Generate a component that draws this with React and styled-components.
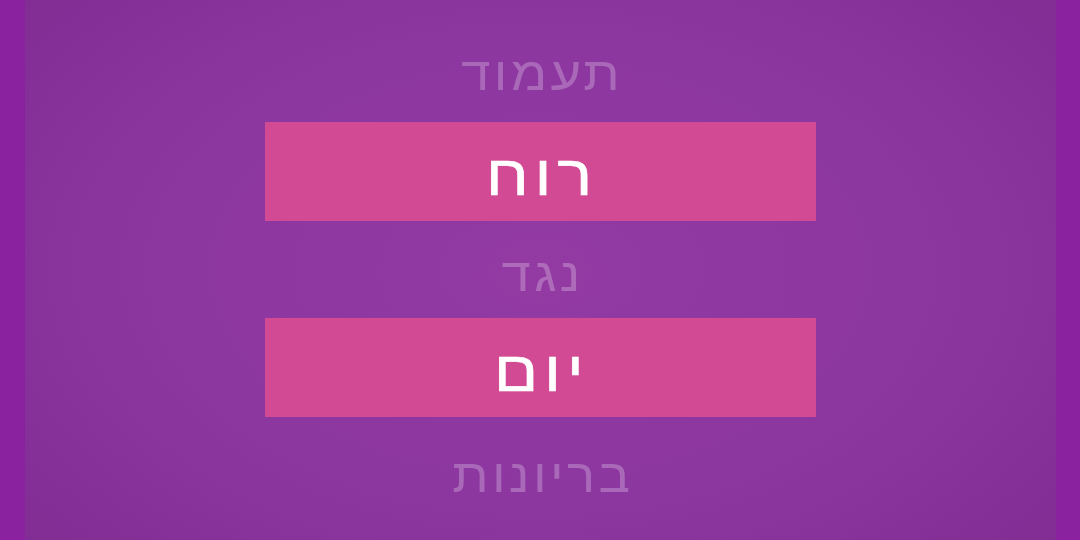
import React from "react";
import styled, { createGlobalStyle } from "styled-components";

const Global = createGlobalStyle`
  html, body { margin: 0; padding: 0; width: 1080px; height: 540px; overflow: hidden; }
  body { background: #8a22a0; font-family: "Liberation Sans", Arial, sans-serif; }
`;

const Frame = styled.div`
  width: 1080px;
  height: 540px;
  display: flex;
  justify-content: center;
  background: #8a22a0;
`;

const Panel = styled.div`
  width: 1031px;
  height: 540px;
  box-sizing: border-box;
  padding: 25px 0;
  display: flex;
  flex-direction: column;
  align-items: center;
  background: radial-gradient(ellipse 75% 90% at 50% 50%, #933aa3 0%, #8c36a0 50%, #7e2a90 100%);
`;

const Row = styled.div`
  width: 551px;
  height: ${(p) => (p.$active ? "99px" : "97px")};
  flex: none;
  display: flex;
  align-items: center;
  justify-content: center;
  direction: rtl;
  background: ${(p) => (p.$active ? "#d24a94" : "transparent")};
  color: ${(p) => (p.$active ? "#ffffff" : "rgba(255,255,255,0.25)")};
  font-size: ${(p) => (p.$active ? "57px" : "47px")};
  line-height: 1;
`;

const Word = styled.span`
  display: block;
  letter-spacing: ${(p) => p.$ls}px;
  margin-inline-end: -${(p) => p.$ls}px;
  -webkit-text-stroke: ${(p) => (p.$active ? "0.6px #ffffff" : "0")};
  transform: translate(4px, ${(p) => p.$dy}px) scaleX(${(p) => (p.$active ? 1.15 : 1.12)});
`;

const words = [
  { t: "תעמוד", a: false, dy: 0 },
  { t: "רוח", a: true, dy: 4 },
  { t: "נגד", a: false, dy: 5 },
  { t: "יום", a: true, dy: 4 },
  { t: "בריונות", a: false, dy: 10 },
];

export default function App() {
  return (
    <>
      <Global />
      <Frame>
        <Panel>
          {words.map((w, i) => (
            <Row key={i} $active={w.a}>
              <Word $active={w.a} $dy={w.dy} $ls={w.a ? 5 : 3}>
                {w.t}
              </Word>
            </Row>
          ))}
        </Panel>
      </Frame>
    </>
  );
}
